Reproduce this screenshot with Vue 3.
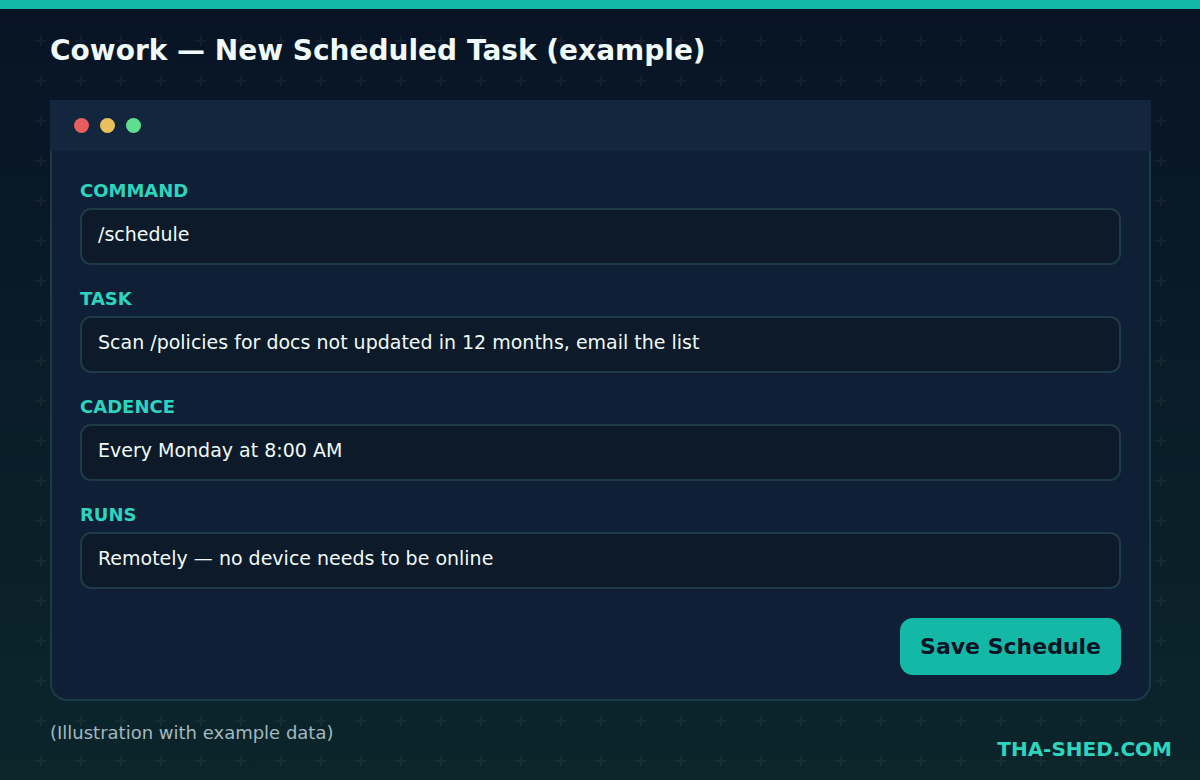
<script setup>
import { ref } from 'vue'

const fields = ref([
  { id: 'command', label: 'COMMAND', value: '/schedule' },
  { id: 'task', label: 'TASK', value: 'Scan /policies for docs not updated in 12 months, email the list' },
  { id: 'cadence', label: 'CADENCE', value: 'Every Monday at 8:00 AM' },
  { id: 'runs', label: 'RUNS', value: 'Remotely — no device needs to be online' }
])
</script>

<template>
  <div class="page">
    <svg class="grid" aria-hidden="true">
      <defs>
        <pattern id="plus" width="40" height="40" patternUnits="userSpaceOnUse">
          <path d="M15 20h5v-5h2v5h4v2h-4v4h-2v-4h-5z" fill="#ffffff" fill-opacity="0.045" />
        </pattern>
      </defs>
      <rect width="100%" height="100%" fill="url(#plus)" />
    </svg>
    <main class="content">
      <h1>Cowork — New Scheduled Task (example)</h1>
      <section class="window">
        <div class="titlebar">
          <span class="dot red"></span>
          <span class="dot amber"></span>
          <span class="dot green"></span>
        </div>
        <form class="body" @submit.prevent>
          <div v-for="f in fields" :key="f.id" class="field">
            <label :for="f.id">{{ f.label }}</label>
            <input :id="f.id" v-model="f.value" type="text" />
          </div>
          <button type="submit">Save Schedule</button>
        </form>
      </section>
      <footer>
        <span class="note">(Illustration with example data)</span>
        <a href="#">THA-SHED.COM</a>
      </footer>
    </main>
  </div>
</template>

<style>
body {
  margin: 0;
}
</style>

<style scoped>
.page {
  position: relative;
  box-sizing: border-box;
  min-height: 100vh;
  border-top: 9px solid #14b8a6;
  background: linear-gradient(#081425, #0b252b);
  font-family: "DejaVu Sans", sans-serif;
}
.grid {
  position: absolute;
  top: 11px;
  left: 20px;
  width: calc(100% - 40px);
  height: calc(100% - 11px);
}
.content {
  position: relative;
  padding: 26px 49px 0 50px;
}
h1 {
  margin: 0 0 33px;
  font-size: 28px;
  line-height: 32px;
  font-weight: 700;
  color: #f0faf8;
}
.titlebar {
  display: flex;
  align-items: center;
  gap: 11px;
  height: 51px;
  padding: 0 24px;
  background: #12273e;
}
.dot {
  width: 15px;
  height: 15px;
  border-radius: 50%;
}
.red {
  background: #e85d5d;
}
.amber {
  background: #e8c15d;
}
.green {
  background: #5ddf8f;
}
.body {
  display: flex;
  flex-direction: column;
  gap: 23px;
  padding: 29px 28px 24px;
  border: 2px solid #1e3a47;
  border-top: 0;
  border-radius: 0 0 17px 17px;
  background: #0f1f36;
}
.field {
  display: flex;
  flex-direction: column;
  gap: 6px;
}
label {
  font-size: 18px;
  line-height: 22px;
  font-weight: 700;
  color: #2dd4bf;
}
input {
  box-sizing: border-box;
  width: 100%;
  height: 57px;
  margin: 0;
  padding: 0 16px 6px;
  border: 2px solid #1e3a47;
  border-radius: 11px;
  outline: none;
  background: #0d1a29;
  color: #f0faf8;
  font-family: inherit;
  font-size: 19px;
}
button {
  align-self: flex-end;
  height: 57px;
  margin-top: 6px;
  padding: 0 20px;
  border: 0;
  border-radius: 13px;
  background: #14b8a6;
  color: #081425;
  font-family: inherit;
  font-size: 22px;
  font-weight: 700;
}
footer {
  display: flex;
  justify-content: space-between;
  align-items: flex-start;
  margin-right: -21px;
  padding-top: 20px;
}
.note {
  font-size: 18px;
  line-height: 24px;
  color: #a3b8bf;
}
footer a {
  padding-top: 16px;
  font-size: 20px;
  line-height: 24px;
  font-weight: 700;
  color: #2dd4bf;
  text-decoration: none;
}
</style>
